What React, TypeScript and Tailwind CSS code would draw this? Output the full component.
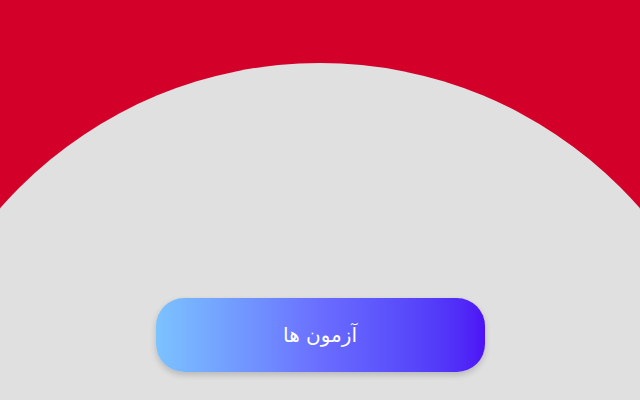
export default function App() {
  return (
    <div className="flex h-[400px] w-full flex-col items-center overflow-hidden bg-[#d3002a]">
      <div className="mt-[63px] flex h-[850px] w-[850px] shrink-0 flex-col items-center rounded-full bg-[#e0e0e0] pt-[235px]">
        <button
          dir="rtl"
          className="flex h-[74px] w-[329px] items-center justify-center rounded-[28px] bg-gradient-to-r from-[#7cc2ff] via-[#6a6dff] to-[#4d12f6] text-[20px] text-white shadow-[0_3px_6px_rgba(0,0,0,0.18)]"
          style={{ fontFamily: '"DejaVu Sans", "Noto Sans", sans-serif' }}
        >
          آزمون ها
        </button>
      </div>
    </div>
  )
}
